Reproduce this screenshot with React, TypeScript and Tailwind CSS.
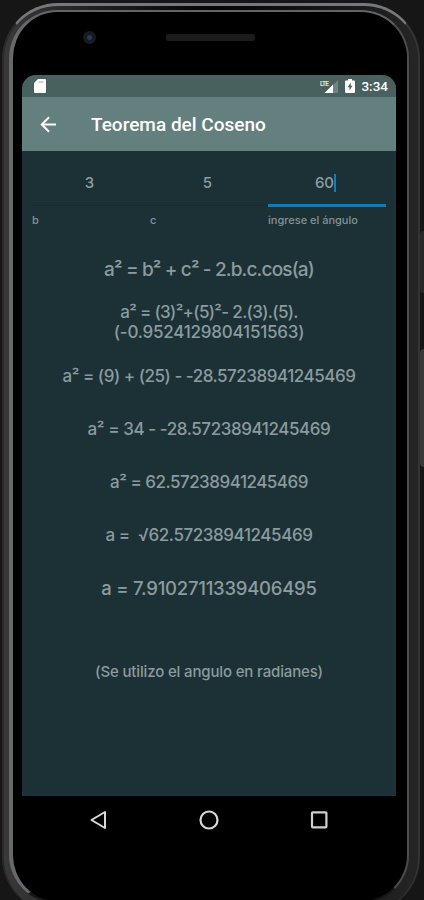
import type { FC, ReactNode } from 'react';

interface FieldProps {
  value: string;
  hint: string;
  focused?: boolean;
}

interface LineProps {
  className?: string;
  children: ReactNode;
}

const Field: FC<FieldProps> = ({ value, hint, focused = false }) => (
  <div className="w-[118px] flex flex-col">
    <div className="h-[45px] pt-[3px] pr-[3px] flex items-center justify-center text-[15px] font-[450] text-[#919da0]">
      <span>{value}</span>
      {focused && <span className="w-[2px] h-[18px] bg-[#087fce]" />}
    </div>
    <div className="h-[4px] flex items-center">
      <div className={focused ? 'w-full h-[3px] bg-[#087fc5]' : 'w-full h-px bg-[#182a2e]'} />
    </div>
    <span className="mt-[4px] text-[11px] leading-[18px] font-[450] text-[#849195] whitespace-nowrap">{hint}</span>
  </div>
);

const Line: FC<LineProps> = ({ className = '', children }) => (
  <p className={`flex items-center justify-center whitespace-pre ${className}`}>{children}</p>
);

const StatusBar: FC = () => (
  <div className="h-[22px] bg-[#48605e] flex items-center justify-between pl-[12px] pr-[8px]">
    <svg className="w-[12px] h-[14px]" viewBox="0 0 12 14">
      <path fill="#fff" d="M4 0h7q1 0 1 1v12q0 1-1 1H1q-1 0-1-1V4z" />
      <path stroke="#9aa9a7" strokeWidth="1" d="M4.5 3h5" />
    </svg>
    <div className="flex items-center">
      <svg className="w-[18px] h-[15px]" viewBox="0 0 18 15">
        <path fill="#71827f" d="M18 1v13H5z" />
        <path fill="#fff" d="M13 5.5V14H4.5z" />
        <text x="0" y="6.5" fill="#dce4e3" fontSize="6.5" fontWeight="700" fontFamily="Roboto, sans-serif" textLength="9">LTE</text>
      </svg>
      <svg className="w-[10px] h-[14px] ml-[7px]" viewBox="0 0 10 14">
        <path fill="#fff" d="M3 0h4v1.5h2q1 0 1 1V13q0 1-1 1H1q-1 0-1-1V2.5q0-1 1-1h2z" />
        <path fill="#48605e" d="M5.8 3.5 2.7 8.3h1.8v3.2l2.9-4.8H5.8z" />
      </svg>
      <span className="ml-[6px] pt-px text-[13.5px] font-medium text-white">3:34</span>
    </div>
  </div>
);

const AppBar: FC = () => (
  <div className="h-[54px] bg-[#64807e] flex items-center pl-[18px] text-white">
    <svg className="w-[17px] h-[17px]" viewBox="0 0 17 17" fill="none" stroke="currentColor" strokeWidth="2">
      <path d="M16 8.5H2M9 1.3 1.8 8.5 9 15.7" />
    </svg>
    <h1 className="ml-[34px] pt-[2px] text-[19px] font-medium whitespace-nowrap">Teorema del Coseno</h1>
  </div>
);

const NavigationBar: FC = () => (
  <div className="h-[47px] px-[67px] flex items-center justify-between">
    <svg className="w-[18px] h-[20px]" viewBox="0 0 18 20" fill="none" stroke="#d8d8d8" strokeWidth="2">
      <path strokeLinejoin="round" d="M16 2v16L2.5 10z" />
    </svg>
    <svg className="w-[20px] h-[20px]" viewBox="0 0 20 20" fill="none" stroke="#d8d8d8" strokeWidth="2.2">
      <circle cx="10" cy="10" r="8.5" />
    </svg>
    <svg className="w-[18px] h-[20px]" viewBox="0 0 18 20" fill="none" stroke="#d0d0d0" strokeWidth="2.2">
      <rect x="2" y="2.3" width="14.4" height="15" rx="0.8" />
    </svg>
  </div>
);

const App: FC = () => {
  return (
    <div className="relative w-[424px] h-[900px] overflow-hidden bg-[#171616] pt-[3px] pl-[2px] font-['Roboto',sans-serif]">
      {/* Phone shell */}
      <div className="w-[418px] h-[910px] rounded-[56px] bg-linear-to-r from-[#3a3839] via-[#050505] to-[#252525] border-t-[3px] border-x-2 border-t-[#777879] border-l-[#2b2a2b] border-r-[#333] pt-[4px] pl-[5px] pr-[9px]">
        <div className="h-[893px] rounded-[48px] bg-black border-t-2 border-l-[4px] border-r-[2px] border-b-2 border-t-[#626466] border-l-[#66686b] border-r-[#4b4c4e] border-b-[#151515] pl-[9px] pr-[12px]">
          {/* Camera and speaker */}
          <div className="h-[63px] flex pl-[61px]">
            <div className="mt-[19px] w-[13px] h-[13px] rounded-full bg-[#171a20] flex items-center justify-center">
              <div className="w-[5px] h-[5px] rounded-full bg-[#203b62]" />
            </div>
            <div className="mt-[22px] ml-[70px] w-[89px] h-[7px] rounded-[2px] bg-[#1b1b1b]" />
          </div>

          <div className="w-[374px] h-[721px] rounded-t-[14px] overflow-hidden bg-[#1b3135]">
            <StatusBar />
            <AppBar />
            <div className="h-[78px] pt-[9px] pl-[10px] flex font-['Inter',sans-serif]">
              <Field value="3" hint="b" />
              <Field value="5" hint="c" />
              <Field value="60" hint="ingrese el ángulo" focused />
            </div>
            <div className="pt-px text-[#8c9b9e] font-['Inter',sans-serif] font-[450] text-[17px]">
              <Line className="h-[80px] text-[19px] tracking-[-0.85px]">a² = b² + c² - 2.b.c.cos(a)</Line>
              <Line className="-mt-[7px] h-[20px] tracking-[-0.67px]">a² = (3)²+(5)²- 2.(3).(5).</Line>
              <Line className="h-[20px] tracking-[-0.22px]">(-0.9524129804151563)</Line>
              <Line className="mt-[7px] h-[53px] tracking-[-0.47px]">a² = (9) + (25) - -28.57238941245469</Line>
              <Line className="h-[53px] tracking-[-0.42px]">a² = 34 - -28.57238941245469</Line>
              <Line className="h-[53px] tracking-[-0.5px]">a² = 62.57238941245469</Line>
              <Line className="h-[53px] tracking-[-0.42px]">a =  √62.57238941245469</Line>
              <Line className="h-[53px] text-[18.5px] tracking-[-0.25px]">a = 7.9102711339406495</Line>
              <Line className="mt-[37px] h-[40px] text-[15px] tracking-[-0.15px]">(Se utilizo el angulo en radianes)</Line>
            </div>
          </div>

          <NavigationBar />
        </div>
      </div>

      {/* Side buttons */}
      <div className="absolute left-[420px] top-[231px] w-[4px] h-[62px] rounded-l-sm bg-[#29292a]" />
      <div className="absolute left-[420px] top-[349px] w-[4px] h-[118px] rounded-l-sm bg-[#39393a]" />
    </div>
  );
};

export default App;
